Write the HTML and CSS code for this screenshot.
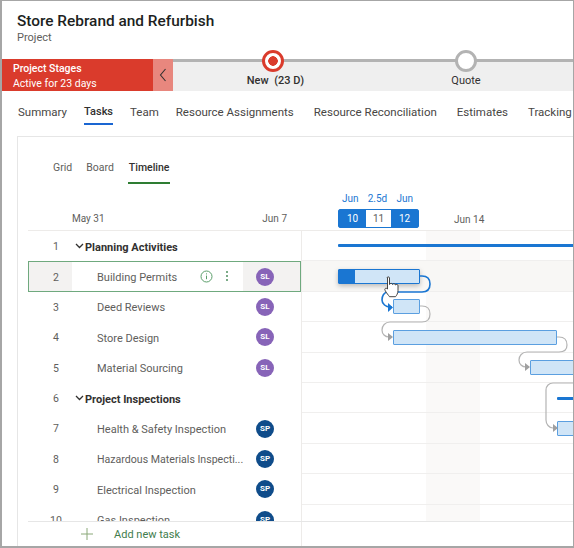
FILE: index.html
```html
<!DOCTYPE html>
<html lang="en">
<head>
    <meta charset="UTF-8">
    <meta name="viewport" content="width=device-width, initial-scale=1.0">
    <title>Store Rebrand and Refurbish</title>
    <link rel="stylesheet" href="styles.css">
</head>
<body>

<div class="frame">
    <div class="page-head">
        <h1>Store Rebrand and Refurbish</h1>
        <div class="page-type">Project</div>
    </div>

    <div class="stages">
        <div class="stage-status">
            <strong>Project Stages</strong>
            <span>Active for 23 days</span>
        </div>
        <div class="stage-back">
            <svg width="8" height="14" viewBox="0 0 8 14"><path d="M6.500 1 1.500 7l5 6" fill="none" stroke="#323130" stroke-width="1.1"/></svg>
        </div>
        <div class="stage-track">
            <div class="stage-step stage-new">
                <span class="dot dot-active"></span>
                <span class="stage-name">New&nbsp; (23 D)</span>
            </div>
            <div class="stage-step stage-quote">
                <span class="dot"></span>
                <span class="stage-name">Quote</span>
            </div>
        </div>
    </div>

    <nav class="tabs">
        <a>Summary</a>
        <a class="active">Tasks</a>
        <a>Team</a>
        <a>Resource Assignments</a>
        <a class="spaced">Resource Reconciliation</a>
        <a class="spaced">Estimates</a>
        <a class="spaced">Tracking</a>
    </nav>

    <div class="card">
        <div class="subtabs">
            <a>Grid</a>
            <a>Board</a>
            <a class="active">Timeline</a>
        </div>

        <div class="dates">
            <div class="dates-left">
                <span>May 31</span>
                <span>Jun 7</span>
            </div>
            <div class="dates-right">
                <div class="range-labels">
                    <span>Jun</span>
                    <span>2.5d</span>
                    <span>Jun</span>
                </div>
                <div class="range">
                    <span class="on">10</span>
                    <span>11</span>
                    <span class="on">12</span>
                </div>
                <span class="week">Jun 14</span>
            </div>
        </div>

        <div class="schedule">
            <div class="task-list">
                <div class="row group"><span class="num">1</span><svg class="chev" width="9" height="6" viewBox="0 0 9 6"><path d="M1 1l3.500 3.500L8 1" fill="none" stroke="#323130" stroke-width="1.3"/></svg><span class="name">Planning Activities</span></div>
                <div class="row selected">
                    <span class="num">2</span>
                    <span class="name">Building Permits</span>
                    <svg class="info" width="13" height="13" viewBox="0 0 13 13"><circle cx="6.500" cy="6.500" r="5.500" fill="none" stroke="#5a9e6a"/><path d="M6.500 5.600v3.600M6.500 3.400v1" stroke="#5a9e6a"/></svg>
                    <span class="kebab"><i></i><i></i><i></i></span>
                    <span class="who"><span class="avatar sl">SL</span></span>
                </div>
                <div class="row"><span class="num">3</span><span class="name">Deed Reviews</span><span class="who"><span class="avatar sl">SL</span></span></div>
                <div class="row"><span class="num">4</span><span class="name">Store Design</span><span class="who"><span class="avatar sl">SL</span></span></div>
                <div class="row"><span class="num">5</span><span class="name">Material Sourcing</span><span class="who"><span class="avatar sl">SL</span></span></div>
                <div class="row group"><span class="num">6</span><svg class="chev" width="9" height="6" viewBox="0 0 9 6"><path d="M1 1l3.500 3.500L8 1" fill="none" stroke="#323130" stroke-width="1.3"/></svg><span class="name">Project Inspections</span></div>
                <div class="row"><span class="num">7</span><span class="name">Health &amp; Safety Inspection</span><span class="who"><span class="avatar sp">SP</span></span></div>
                <div class="row"><span class="num">8</span><span class="name long">Hazardous Materials Inspecti...</span><span class="who"><span class="avatar sp">SP</span></span></div>
                <div class="row"><span class="num">9</span><span class="name">Electrical Inspection</span><span class="who"><span class="avatar sp">SP</span></span></div>
                <div class="row"><span class="num">10</span><span class="name">Gas Inspection</span><span class="who"><span class="avatar sp">SP</span></span></div>
            </div>

            <div class="gantt">
                <div class="weekend"></div>
                <div class="line"></div><div class="line hl"></div><div class="line"></div><div class="line"></div><div class="line"></div>
                <div class="line"></div><div class="line"></div><div class="line"></div><div class="line"></div><div class="line"></div>

                <div class="summary s1"></div>
                <div class="summary s2"></div>
                <div class="bar b2"><span class="done"></span></div>
                <div class="bar b3"></div>
                <div class="bar b4"></div>
                <div class="bar b5"></div>
                <div class="bar b7"></div>

                <!-- viewBox follows the page: gantt box starts at 302, 231 -->
                <svg class="links" width="272" height="290" viewBox="302 231 272 290">
                    <g fill="none" stroke="#b4b4b4" stroke-width="1.2">
                        <path d="M420 306h2c5 0 8 3 8 8s-3 8-8 8h-32c-5 0-8 4-8 8 0 4 3 7 7 7h3"/>
                        <path d="M557 337h2c5 0 8 3 8 8s-3 7-8 7h-32c-5 0-8 4-8 8 0 4 3 7 7 7h3"/>
                        <path d="M574 383h-21c-4 0-7 3-7 7v30c0 4 3 8 7 8h1"/>
                    </g>
                    <g fill="#a0a0a0">
                        <path d="M388 333l5 4-5 4z"/>
                        <path d="M525 363l5 4-5 4z"/>
                        <path d="M553 424l5 4-5 4z"/>
                    </g>
                    <path d="M420 276h2c5 0 8 3 8 8s-3 8-8 8h-34c-4 0-6 4-6 8 0 4 4 7 8 7h2" fill="none" stroke="#1a76d2" stroke-width="1.6"/>
                    <path d="M388 303l5 4.500-5 4.500z" fill="#1a76d2"/>
                    <path class="hand" d="M387 278c0-1.500 2.500-1.500 2.500 0v6.500c.5-1.500 3-1.500 3 0 .5-1.200 3-1 3 .5.5-1 2.500-.8 2.500.7v5c0 2.500-1.500 5-2.500 6h-6c-1-1.500-3-3.500-4.500-6.500-.8-1.500 1-2.800 2.500-1.200v-11z"/>
                </svg>
            </div>
        </div>

        <div class="add-row">
            <div class="add-cell">
                <svg width="12" height="12" viewBox="0 0 12 12"><path d="M6 0v12M0 6h12" stroke="#8aa878" stroke-width="1"/></svg>
                <span>Add new task</span>
            </div>
        </div>
    </div>
</div>

</body>
</html>
```

FILE: styles.css
```css
* {
    box-sizing: border-box;
}

body {
    margin: 0;
    font-family: Roboto, "Noto Sans", sans-serif;
    background-color: #fff;
}

.frame {
    width: 574px;
    height: 548px;
    border: 1px solid #a6a6a6;
    border-width: 1px 1px 2px 2px;
    overflow: hidden;
    display: flex;
    flex-direction: column;
}

.page-head {
    height: 58px;
    padding: 11px 0 0 15px;
}

h1 {
    margin: 0;
    font-size: 15.4px;
    line-height: 18px;
    font-weight: 500;
    color: #201f1e;
}

.page-type {
    font-size: 11px;
    line-height: 15px;
    color: #605e5c;
}

.stages {
    display: flex;
    height: 32px;
    flex: none;
}

.stage-status {
    width: 151px;
    background-color: #da3b2c;
    color: #fff;
    padding: 2px 0 0 11px;
    display: flex;
    flex-direction: column;
    font-size: 10.5px;
    line-height: 15px;
}

.stage-status strong {
    font-weight: 500;
}

.stage-back {
    width: 20px;
    background-color: #e8877e;
    display: flex;
    align-items: center;
    justify-content: center;
}

.stage-track {
    flex: 1;
    position: relative;
    background-color: #efefef;
    border-top: 3px solid #b3b3b3;
}

.stage-step {
    position: absolute;
    top: -12px;
    display: flex;
    flex-direction: column;
    align-items: center;
    width: 100px;
}

.stage-new {
    left: 50px;
}

.stage-quote {
    left: 243px;
}

.dot {
    width: 22px;
    height: 22px;
    border-radius: 50%;
    background-color: #fff;
    border: 3px solid #b3b3b3;
}

.dot-active {
    border-color: #da3b2c;
    background: radial-gradient(circle, #da3b2c 0 4.500px, #fff 5px);
}

.stage-name {
    margin-top: 1px;
    font-size: 11px;
    line-height: 15px;
    color: #323130;
    white-space: nowrap;
}

.stage-new .stage-name {
    font-weight: 500;
    margin-left: 5px;
}

.tabs {
    display: flex;
    gap: 17px;
    padding: 12px 0 0 16px;
    height: 45px;
    flex: none;
    font-size: 11.5px;
    color: #484644;
    white-space: nowrap;
}

.tabs a {
    height: 22px;
    line-height: 18px;
}

.tabs a.spaced {
    margin-left: 3px;
}

.tabs a.active {
    color: #323130;
    font-size: 11px;
    font-weight: 500;
    border-bottom: 2px solid #1a66d2;
}

.card {
    margin-left: 15px;
    width: 600px;
    flex: 1;
    min-height: 0;
    border: 1px solid #e6e6e6;
    border-bottom: none;
    display: flex;
    flex-direction: column;
}

.subtabs {
    display: flex;
    gap: 14px;
    padding: 23px 0 0 35px;
    height: 48px;
    flex: none;
    font-size: 10.5px;
    color: #605e5c;
}

.subtabs a {
    line-height: 15px;
    height: 24px;
}

.subtabs a.active {
    color: #323130;
    font-weight: 500;
    border-bottom: 2px solid #2e7d32;
    padding: 0 1px;
}

.dates {
    display: flex;
    height: 46px;
    flex: none;
    font-size: 10px;
    color: #605e5c;
}

.dates-left {
    display: flex;
    justify-content: space-between;
    padding: 20px 14px 0 44px;
    line-height: 28px;
    border-bottom: 1px solid #edebe9;
    margin-left: 10px;
    width: 273px;
}

.dates-right {
    flex: 1;
    position: relative;
    border-bottom: 1px solid #edebe9;
}

.range-labels {
    position: absolute;
    left: 37px;
    top: 7px;
    width: 80px;
    display: flex;
    justify-content: space-between;
    color: #1a76d2;
    line-height: 14px;
}

.range-labels span:nth-child(1) {
    margin-left: 4px;
}

.range-labels span:nth-child(3) {
    margin-right: 5px;
}

.range {
    position: absolute;
    left: 37px;
    top: 24px;
    display: flex;
    height: 19px;
    border: 1px solid #1a76d2;
    border-radius: 2px;
    line-height: 17px;
    text-align: center;
}

.range span {
    width: 25px;
}

.range .on {
    width: 27px;
    background-color: #1a76d2;
    color: #fff;
}

.week {
    position: absolute;
    left: 153px;
    top: 28px;
    line-height: 14px;
}

.schedule {
    display: flex;
    flex: 1;
    min-height: 0;
    overflow: hidden;
}

.task-list {
    width: 274px;
    margin-left: 10px;
    flex: none;
    border-right: 1px solid #edebe9;
    font-size: 11px;
    color: #605e5c;
}

.row {
    height: 30.4px;
    display: flex;
    align-items: center;
    position: relative;
    white-space: nowrap;
}

.num {
    width: 56px;
    text-align: center;
    flex: none;
    align-self: stretch;
    line-height: 32px;
    font-size: 10.5px;
}

.name {
    margin-left: 13px;
    margin-top: 2px;
    width: 146px;
    overflow: hidden;
}

.name.long {
    font-size: 10.6px;
}

.group .chev {
    margin-left: -9px;
    margin-right: 1px;
    flex: none;
}

.group .name {
    margin-left: 0;
    width: auto;
    font-weight: 700;
    color: #323130;
}

.who {
    position: absolute;
    right: 0;
    top: 0;
    bottom: 0;
    width: 58px;
    padding-left: 13px;
    display: flex;
    align-items: center;
}

.avatar {
    width: 18px;
    height: 18px;
    border-radius: 50%;
    color: #fff;
    font-size: 8px;
    font-weight: 700;
    line-height: 18px;
    text-align: center;
}

.sl {
    background-color: #8764b8;
}

.sp {
    background-color: #0f4c8a;
}

.selected {
    border: 1px solid #6fa97e;
}

.selected .num {
    width: 43px;
    padding-left: 11px;
    background-color: #f3f2f1;
}

.selected .name {
    margin-left: 25px;
    width: 100px;
}

.selected .who {
    width: 57px;
    background-color: #f3f2f1;
}

.info {
    position: absolute;
    left: 171px;
    top: 8px;
}

.kebab {
    position: absolute;
    left: 197px;
    top: 9px;
    display: flex;
    flex-direction: column;
    gap: 2px;
}

.kebab i {
    width: 2px;
    height: 2px;
    background-color: #4f8f5f;
    border-radius: 50%;
}

.gantt {
    flex: none;
    width: 272px;
    position: relative;
    display: flex;
    flex-direction: column;
}

.line {
    height: 30.4px;
    flex: none;
    position: relative;
    border-bottom: 1px solid #f0efee;
}

.line.hl {
    background-color: #f8f7f5;
}

.weekend {
    position: absolute;
    left: 124px;
    width: 54px;
    top: 0;
    bottom: 0;
    background-color: #faf9f8;
}

.summary {
    position: absolute;
    height: 3px;
    background-color: #1a76d2;
    border-radius: 1px;
}

.s1 {
    left: 36px;
    top: 13px;
    width: 240px;
}

.s2 {
    left: 255px;
    top: 166px;
    width: 20px;
}

.bar {
    position: absolute;
    height: 15px;
    background-color: #d0e5f7;
    border: 1px solid #5b9fe0;
    border-radius: 1px;
}

.b2 {
    left: 36px;
    top: 38px;
    width: 82px;
    border-color: #1a76d2;
    box-shadow: 0 2px 5px rgba(0, 0, 0, 0.25);
}

.done {
    display: block;
    width: 16px;
    height: 100%;
    background-color: #1a76d2;
}

.b3 {
    left: 91px;
    top: 68px;
    width: 27px;
}

.b4 {
    left: 91px;
    top: 99px;
    width: 164px;
}

.b5 {
    left: 228px;
    top: 129px;
    width: 60px;
}

.b7 {
    left: 255px;
    top: 190px;
    width: 30px;
}

.links {
    position: absolute;
    left: 0;
    top: 0;
}

.hand {
    fill: #fff;
    stroke: #323130;
    stroke-width: 0.9;
}

.add-row {
    height: 25px;
    flex: none;
    margin-left: 10px;
    border-top: 1px solid #e6e6e6;
}

.add-cell {
    width: 274px;
    height: 100%;
    border-right: 1px solid #edebe9;
    display: flex;
    align-items: center;
    padding-left: 53px;
    gap: 21px;
    font-size: 11px;
    color: #3f7d4c;
}
```
